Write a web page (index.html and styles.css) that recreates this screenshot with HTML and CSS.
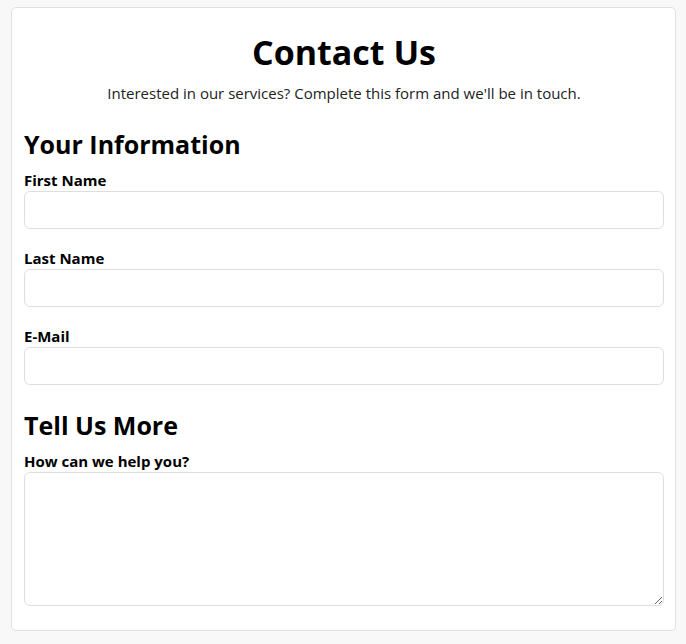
FILE: index.html
```html
<!DOCTYPE html>
<html lang="en">

<head>
    <meta charset="UTF-8">
    <meta name="viewport" content="width=device-width, initial-scale=1.0">
    <title>Contact Us</title>
    <link rel="stylesheet" href="styles.css">
</head>

<body>
    <form class="card" action="." method="post">
        <header class="intro">
            <h1>Contact Us</h1>
            <p>Interested in our services? Complete this form and we'll be in touch.</p>
        </header>

        <h2>Your Information</h2>
        <div class="field">
            <label for="first">First Name</label>
            <input type="text" id="first" name="first">
        </div>
        <div class="field">
            <label for="last">Last Name</label>
            <input type="text" id="last" name="last">
        </div>
        <div class="field">
            <label for="email">E-Mail</label>
            <input type="email" id="email" name="email">
        </div>

        <h2>Tell Us More</h2>
        <div class="field">
            <label for="help">How can we help you?</label>
            <textarea id="help" name="help"></textarea>
        </div>
    </form>
</body>

</html>
```

FILE: styles.css
```css
* {
    box-sizing: border-box;
    padding: 0;
    margin: 0;
}

html,
body {
    width: 100%;
    height: 100%;
}

body {
    background: #f8f8f8;
    font-family: "Open Sans", "Noto Sans", sans-serif;
    color: #000;
    padding: 7px 10px 13px 11px;
}

.card {
    background: #fff;
    border: 1px solid #e0e0e4;
    border-radius: 5px;
    padding: 22px 11px 24px 12px;
}

.intro {
    text-align: center;
    margin-bottom: 23px;
}

h1 {
    font-size: 34px;
    font-weight: 700;
    line-height: 44px;
}

.intro p {
    font-size: 15px;
    line-height: 22px;
    color: #222;
    margin-top: 8px;
}

h2 {
    font-size: 25px;
    font-weight: 700;
    line-height: 34px;
    margin-bottom: 8px;
}

.field {
    display: flex;
    flex-direction: column;
    margin-bottom: 18px;
}

.field:last-child {
    margin-bottom: 0;
}

/* collapses with the field's bottom margin */
.field + h2 {
    margin-top: 23px;
}

label {
    font-size: 15px;
    font-weight: 700;
    line-height: 22px;
}

input,
textarea {
    border: 1px solid #dedee2;
    border-radius: 6px;
    background: #fff;
    font: inherit;
}

input {
    height: 38px;
}

textarea {
    height: 134px;
    resize: vertical;
}
```
